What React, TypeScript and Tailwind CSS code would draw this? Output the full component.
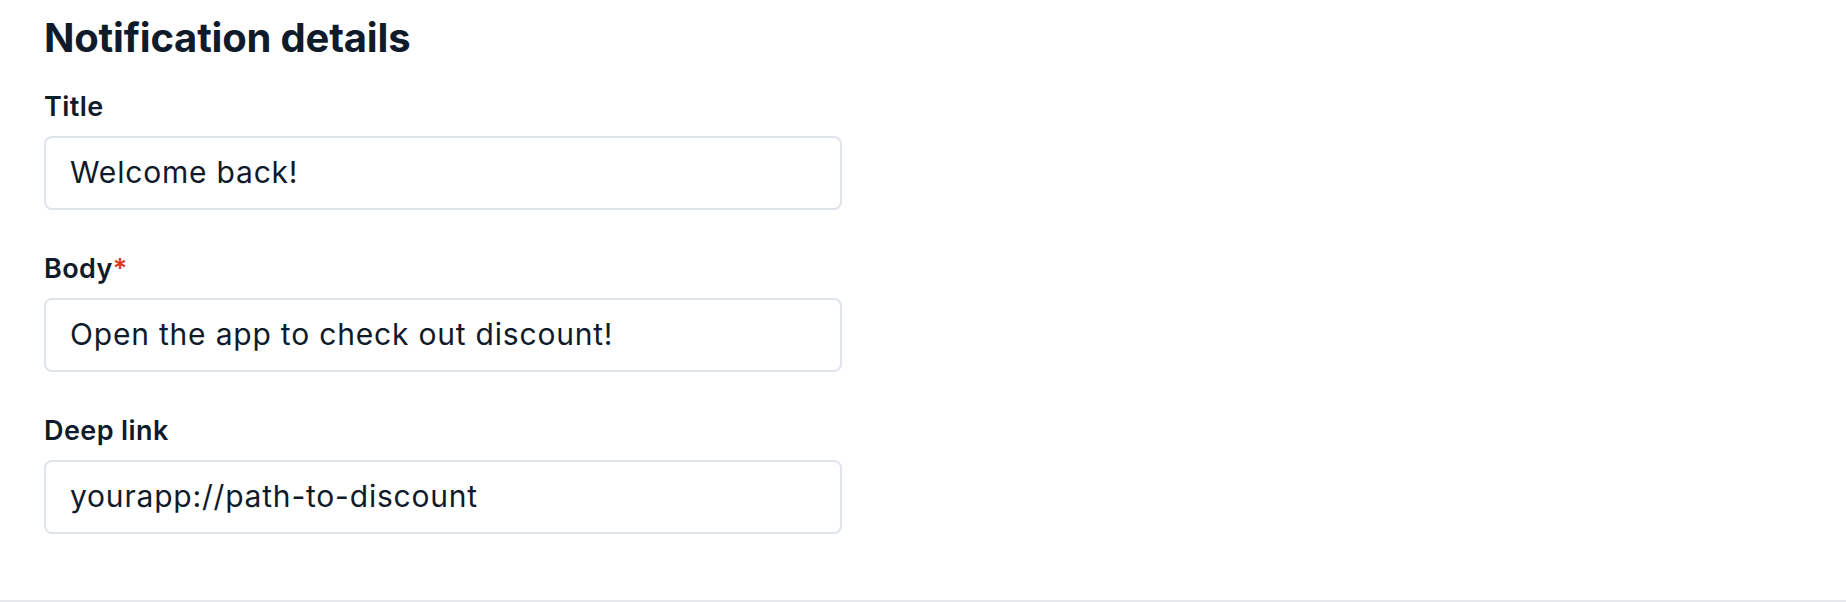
const fields = [
  { label: "Title", value: "Welcome back!", required: false },
  { label: "Body", value: "Open the app to check out discount!", required: true },
  { label: "Deep link", value: "yourapp://path-to-discount", required: false },
];

const App = () => {
  return (
    <div className="h-[602px] w-full bg-white border-b-2 border-[#e5e9ee] pl-[44px] pt-[14px] font-['Inter',sans-serif] text-[#0f1b2a]">
      <h2 className="text-[40px] leading-[48px] font-bold tracking-[-0.2px]">
        Notification details
      </h2>
      <div className="mt-[30px] flex flex-col gap-[44px]">
        {fields.map((field) => (
          <div key={field.label} className="flex flex-col gap-[14px]">
            <label className="text-[27px] leading-[30px] font-semibold tracking-[0.4px]">
              {field.label}
              {field.required && <span className="text-[#e0341e]">*</span>}
            </label>
            <input
              type="text"
              defaultValue={field.value}
              className="h-[74px] w-[798px] rounded-[8px] border-2 border-[#dfe4ea] bg-white px-[24px] pb-[2px] text-[30px] tracking-[0.8px] text-[#0f1b2a] outline-none"
            />
          </div>
        ))}
      </div>
    </div>
  );
};

export default App;
